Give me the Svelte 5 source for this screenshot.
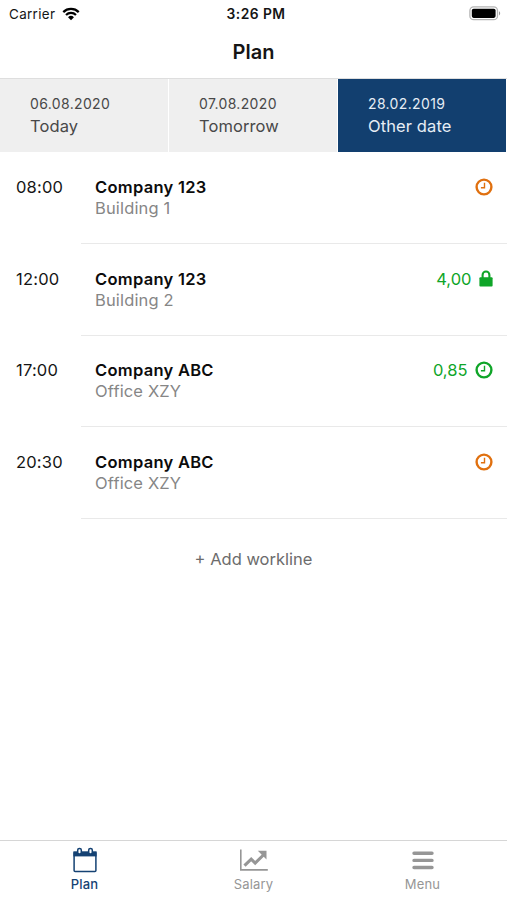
<script>
  let selectedDay = $state('other');
  let selectedTab = $state('plan');

  const days = [
    { id: 'today', date: '06.08.2020', label: 'Today' },
    { id: 'tomorrow', date: '07.08.2020', label: 'Tomorrow' },
    { id: 'other', date: '28.02.2019', label: 'Other date' }
  ];

  const worklines = [
    { time: '08:00', company: 'Company 123', place: 'Building 1', hours: '', status: 'pending' },
    { time: '12:00', company: 'Company 123', place: 'Building 2', hours: '4,00', status: 'locked' },
    { time: '17:00', company: 'Company ABC', place: 'Office XZY', hours: '0,85', status: 'done' },
    { time: '20:30', company: 'Company ABC', place: 'Office XZY', hours: '', status: 'pending' }
  ];

  const tabs = [
    { id: 'plan', label: 'Plan' },
    { id: 'salary', label: 'Salary' },
    { id: 'menu', label: 'Menu' }
  ];
</script>

<div class="screen">
  <header>
    <div class="status-bar">
      <div class="carrier">
        <span>Carrier</span>
        <svg width="18" height="14" viewBox="0 0 17 13">
          <path d="M1.2 4.7a10.4 10.4 0 0 1 14.6 0M3.8 7.4a6.7 6.7 0 0 1 9.4 0" fill="none" stroke="#000" stroke-width="2.1" />
          <path d="M8.5 12.4 5.7 9.6a4 4 0 0 1 5.6 0z" />
        </svg>
      </div>
      <span class="clock">3:26 PM</span>
      <div class="battery">
        <svg width="32" height="15" viewBox="0 0 32 15">
          <rect x="0.9" y="0.9" width="27.6" height="12.8" rx="3.8" fill="#fff" stroke="#b4b4b4" stroke-width="1.3" />
          <rect x="2.8" y="2.7" width="23.8" height="9.2" rx="1.8" />
          <path d="M30 5.2c1.6.6 1.6 3.6 0 4.2z" fill="#999" />
        </svg>
      </div>
    </div>
    <h1>Plan</h1>
  </header>

  <div class="days">
    {#each days as day}
      <button class="day" class:active={selectedDay === day.id} onclick={() => (selectedDay = day.id)}>
        <span class="date">{day.date}</span>
        <span class="label">{day.label}</span>
      </button>
    {/each}
  </div>

  <main>
    {#each worklines as line}
      <div class="workline">
        <span class="time">{line.time}</span>
        <div class="details">
          <div class="info">
            <strong>{line.company}</strong>
            <span class="place">{line.place}</span>
          </div>
          <div class="state {line.status}">
            {#if line.hours}
              <span>{line.hours}</span>
            {/if}
            {#if line.status === 'locked'}
              <svg class="lock" width="14" height="17" viewBox="0 0 14 17">
                <path d="M3.6 8V4.9a3.4 3.4 0 0 1 6.8 0V8" fill="none" stroke="currentColor" stroke-width="2.1" />
                <rect x="0.4" y="7.2" width="13.2" height="9.3" rx="1" fill="currentColor" />
              </svg>
            {:else}
              <svg width="18" height="18" viewBox="0 0 18 18" fill="none" stroke="currentColor">
                <circle cx="9" cy="9" r="7.4" stroke-width="2.4" />
                <path d="M9.5 4.8v4.9H5.9" stroke-width="1.4" />
              </svg>
            {/if}
          </div>
        </div>
      </div>
    {/each}
    <button class="add">+ Add workline</button>
  </main>

  <nav>
    {#each tabs as tab}
      <button class="tab" class:active={selectedTab === tab.id} onclick={() => (selectedTab = tab.id)}>
        {#if tab.id === 'plan'}
          <svg width="30" height="26" viewBox="0 0 30 26" fill="none" stroke="currentColor">
            <path d="M4.1 6h21.8v17.4a1 1 0 0 1-1 1H5.1a1 1 0 0 1-1-1z" stroke-width="1.5" />
            <path d="M3.4 4.3h23.2v5.1H3.4z" fill="currentColor" stroke="none" />
            <rect x="7.7" y="1.4" width="3.6" height="5.6" rx="1.7" fill="#fff" stroke-width="1.5" />
            <rect x="18.7" y="1.4" width="3.6" height="5.6" rx="1.7" fill="#fff" stroke-width="1.5" />
          </svg>
        {:else if tab.id === 'salary'}
          <svg width="30" height="26" viewBox="0 0 30 26" fill="none" stroke="currentColor">
            <path d="M1.8 2.5v20.4h27" stroke-width="1.6" />
            <path d="M5.5 18.7l6.7-6.6 4 4L24.4 8" stroke-width="3.1" />
            <path d="M18.8 3.8h8.7v8.7z" fill="currentColor" stroke="none" />
          </svg>
        {:else}
          <svg width="30" height="26" viewBox="0 0 30 26" stroke="currentColor" stroke-width="3.4" stroke-linecap="round">
            <path d="M6 6.3h18M6 13.4h18M6 20.5h18" />
          </svg>
        {/if}
        <span>{tab.label}</span>
      </button>
    {/each}
  </nav>
</div>

<style>
  :global(body) {
    margin: 0;
    background: #fff;
  }
  .screen {
    display: flex;
    flex-direction: column;
    height: 900px;
    box-sizing: border-box;
    font-family: Inter, 'Liberation Sans', sans-serif;
    font-size: 16.5px;
    color: #151515;
    background: #fff;
  }
  svg {
    display: block;
    flex: none;
  }
  button {
    border: 0;
    margin: 0;
    padding: 0;
    background: none;
    color: inherit;
    font: inherit;
    cursor: pointer;
  }
  header {
    height: 79px;
    box-sizing: border-box;
    border-bottom: 1px solid #dedede;
  }
  .status-bar {
    display: grid;
    grid-template-columns: 1fr auto 1fr;
    align-items: center;
    height: 27px;
    padding: 0 6px 0 9px;
    font-size: 13.4px;
  }
  .carrier {
    display: flex;
    align-items: center;
    gap: 7px;
    letter-spacing: 0.35px;
  }
  .clock {
    padding-left: 2px;
    font-size: 13.8px;
    font-weight: 600;
    letter-spacing: 0.45px;
  }
  .battery {
    display: flex;
    justify-content: flex-end;
  }
  h1 {
    margin: 0;
    font-size: 20px;
    font-weight: 600;
    line-height: 50px;
    text-align: center;
  }
  .days {
    display: grid;
    grid-template-columns: repeat(3, 1fr);
    gap: 1px;
    height: 73.4px;
    padding-right: 1px;
  }
  .day {
    display: flex;
    flex-direction: column;
    padding: 14px 0 0 30px;
    background: #efefef;
    color: #484848;
    text-align: left;
  }
  .day.active {
    background: #123f6f;
    color: #e6edf5;
  }
  .date {
    font-size: 14px;
    line-height: 21px;
    letter-spacing: 0.35px;
  }
  .label {
    line-height: 24px;
    letter-spacing: 0.1px;
  }
  main {
    flex: 1;
    display: flex;
    flex-direction: column;
  }
  .workline {
    display: flex;
    height: 91.65px;
    box-sizing: border-box;
  }
  .time {
    width: 65px;
    padding: 23.5px 0 0 16px;
    line-height: 22px;
    letter-spacing: 0.2px;
  }
  .details {
    flex: 1;
    display: flex;
    justify-content: space-between;
    padding: 23.5px 14.5px 0 14px;
    border-bottom: 1px solid #e9e9e9;
  }
  .info {
    display: flex;
    flex-direction: column;
  }
  .info strong {
    font-weight: 600;
    line-height: 22px;
    letter-spacing: 0.28px;
    color: #0c0c0c;
  }
  .place {
    line-height: 20px;
    letter-spacing: 0.15px;
    color: #868686;
  }
  .state {
    display: flex;
    align-items: center;
    gap: 7px;
    height: 22px;
    color: #0fa528;
  }
  .state.pending {
    color: #e0700f;
  }
  .add {
    align-self: center;
    margin-top: 29px;
    line-height: 22px;
    color: #6c6c6c;
  }
  nav {
    display: grid;
    grid-template-columns: repeat(3, 1fr);
    height: 60px;
    box-sizing: border-box;
    border-top: 1px solid #d6d6d6;
  }
  .tab {
    display: flex;
    flex-direction: column;
    align-items: center;
    padding-top: 6px;
    color: #969696;
    font-size: 13px;
    line-height: 22px;
    letter-spacing: 0.2px;
  }
  .tab.active {
    color: #154273;
    font-weight: 500;
  }
</style>
